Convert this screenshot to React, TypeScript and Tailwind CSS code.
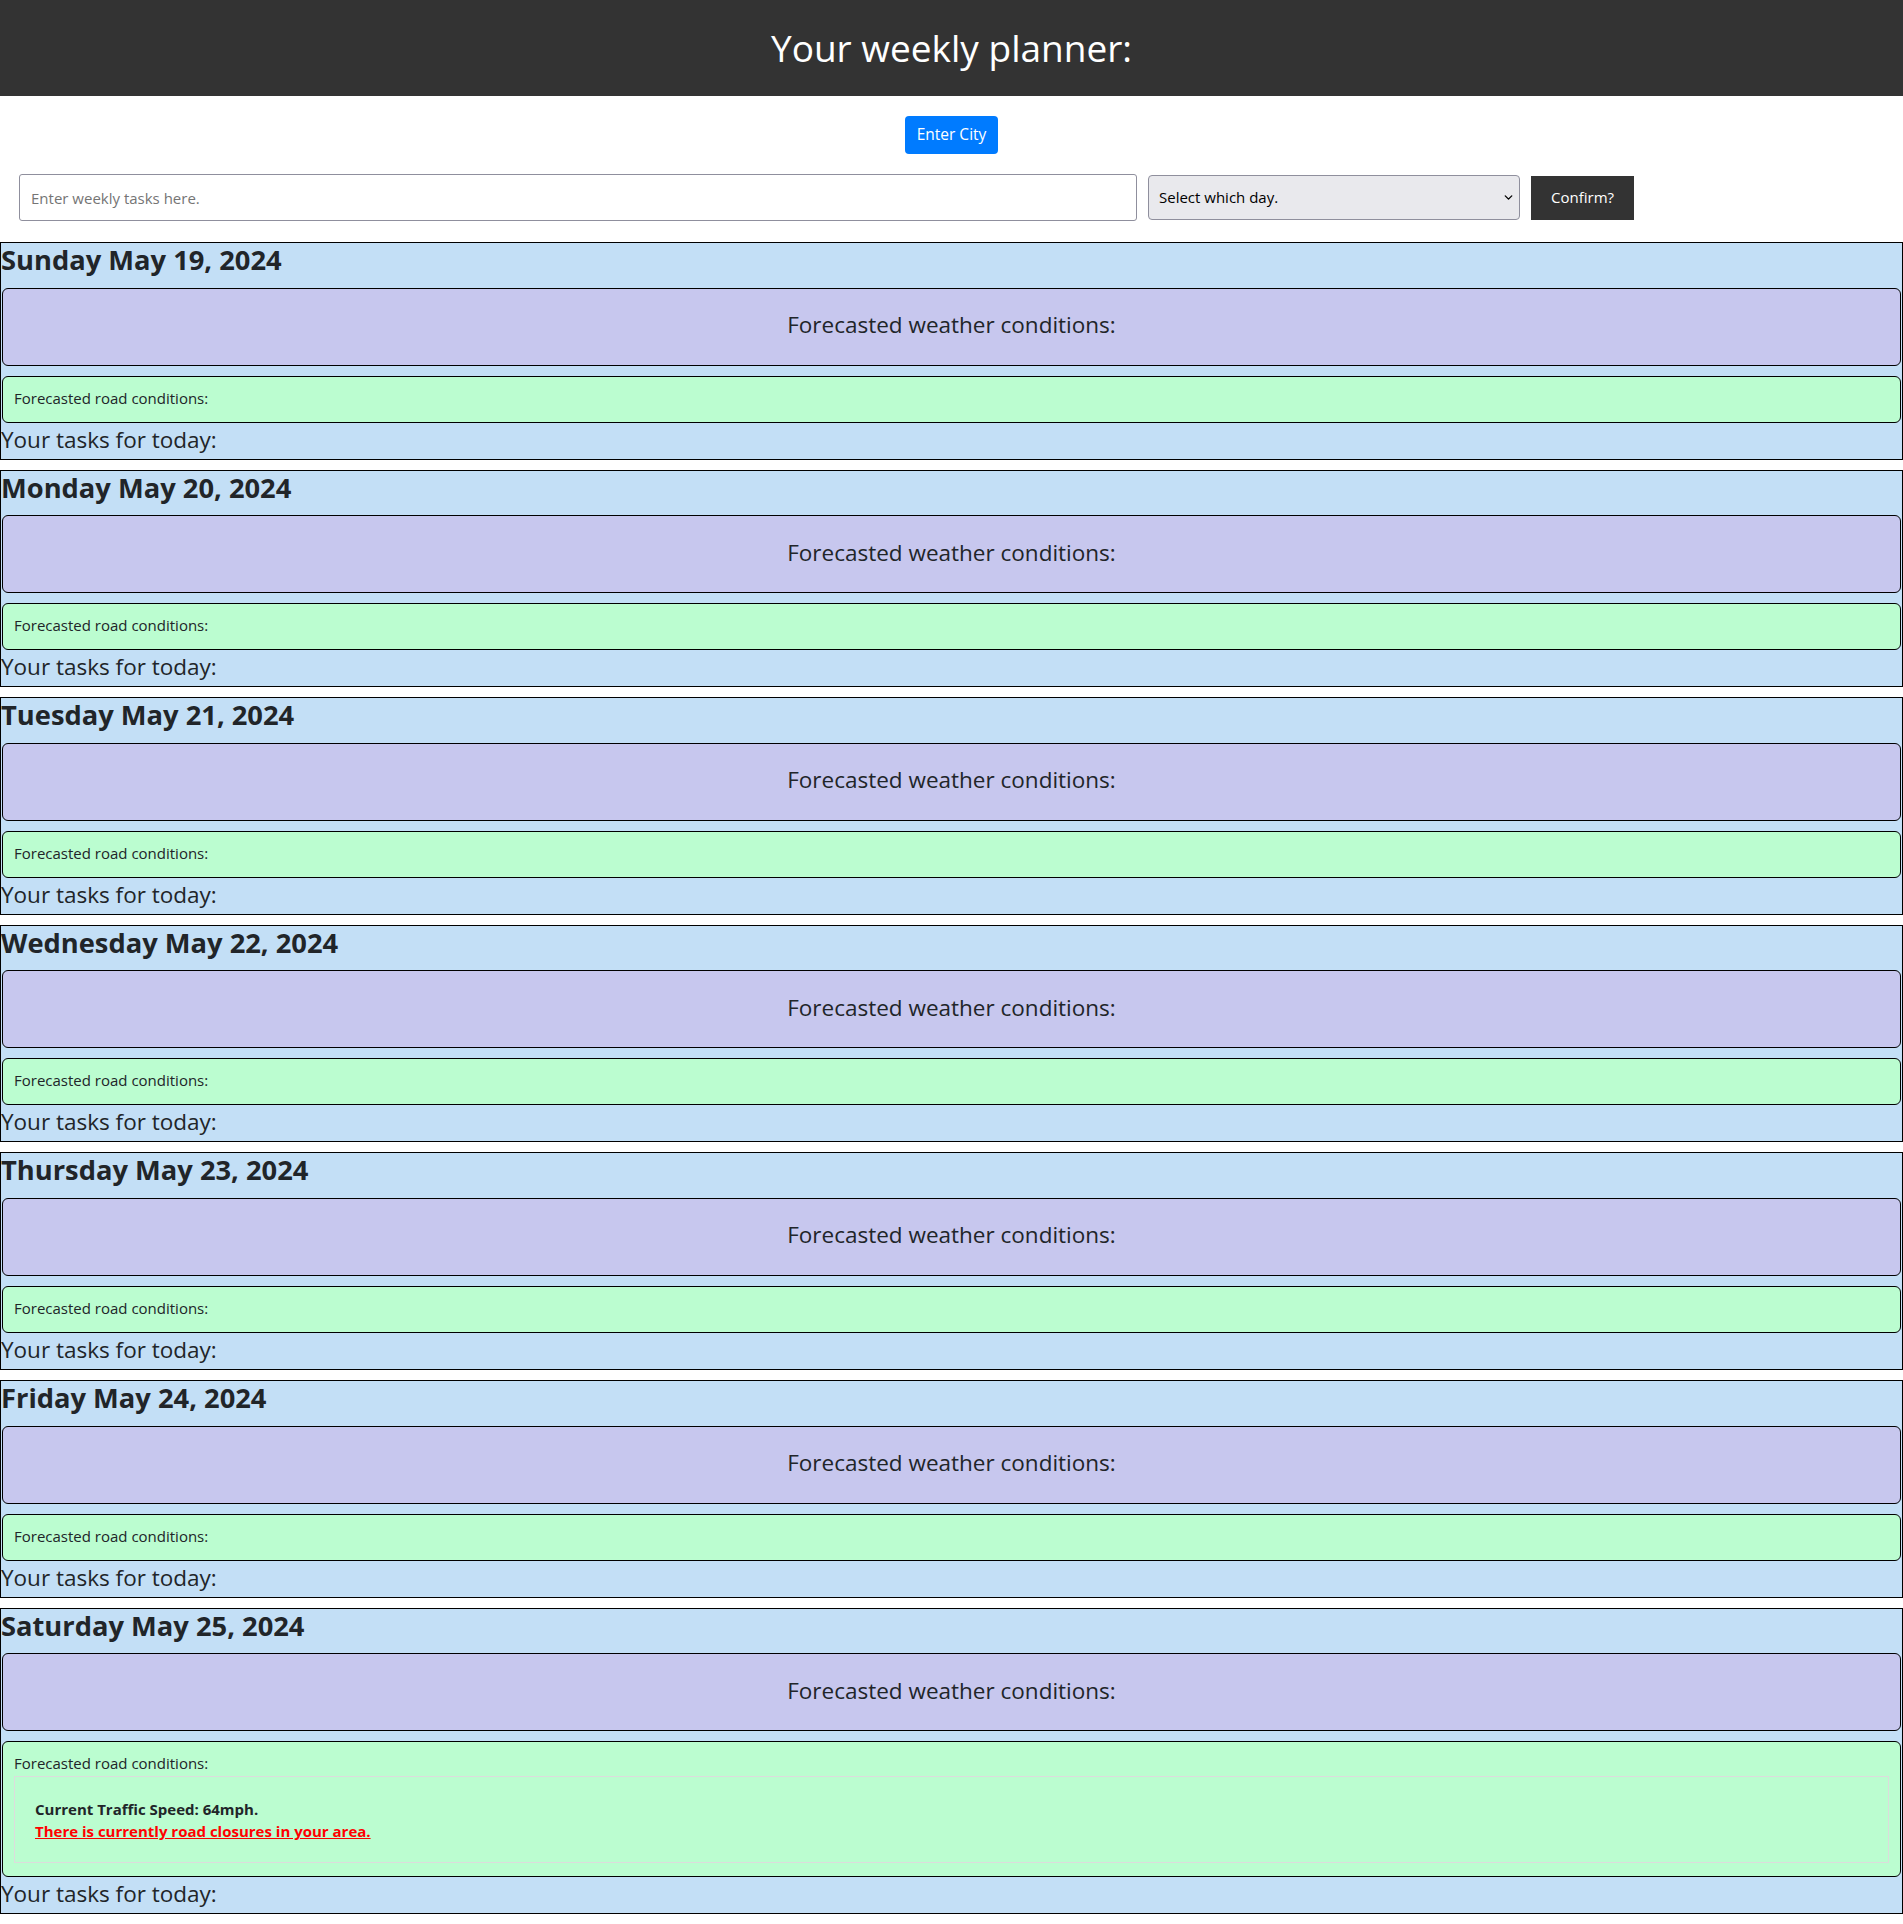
import { ChevronDown } from "lucide-react";

type Day = {
  label: string;
  closures?: boolean;
};

const days: Day[] = [
  { label: "Sunday May 19, 2024" },
  { label: "Monday May 20, 2024" },
  { label: "Tuesday May 21, 2024" },
  { label: "Wednesday May 22, 2024" },
  { label: "Thursday May 23, 2024" },
  { label: "Friday May 24, 2024" },
  { label: "Saturday May 25, 2024", closures: true },
];

function DayCard({ label, closures }: Day) {
  return (
    <section className="mb-[10px] border border-black bg-[#c3dff6] text-[#212529]">
      <h3 className="mb-[11px] text-[27.3px] font-bold leading-[33.6px]">{label}</h3>
      <div className="mx-px flex h-[78px] items-center justify-center rounded-[6px] border border-black bg-[#c7c7ee]">
        <p className="mb-[4px] text-[22.5px] leading-[1.2]">Forecasted weather conditions:</p>
      </div>
      <div className="mx-px mt-[10px] rounded-[6px] border border-black bg-[#bbfdd0] px-[11px] pt-[10px] pb-[13px]">
        <p className="text-[15px] leading-[22px]">Forecasted road conditions:</p>
        {closures && (
          <div className="mt-[2px] border border-[#dcdcdc] pt-[21px] pb-[20px] pl-[20px]">
            <p className="text-[15px] font-bold leading-[22px]">Current Traffic Speed: 64mph.</p>
            <p className="text-[15px] font-bold leading-[22px] text-[#ff0000] underline">
              There is currently road closures in your area.
            </p>
          </div>
        )}
      </div>
      <p className="pb-[3px] text-[22.5px] leading-[33px]">Your tasks for today:</p>
    </section>
  );
}

export default function App() {
  return (
    <div className="min-h-screen bg-white font-['Open_Sans',sans-serif]">
      <header className="flex h-[96px] items-center justify-center bg-[#333333]">
        <h1 className="text-[37px] font-normal text-white">Your weekly planner:</h1>
      </header>

      <div className="flex justify-center pt-[20px]">
        <button className="h-[38px] rounded-[4px] bg-[#007bff] px-[12px] text-[15.5px] text-white">
          Enter City
        </button>
      </div>

      <div className="mt-[20px] flex items-center gap-[11px] pl-[19px]">
        <input
          className="h-[47px] w-[1118px] rounded-[3px] border border-[#8f8f9d] bg-white px-[11px] text-[15px] placeholder:text-[#757575]"
          placeholder="Enter weekly tasks here."
        />
        <div className="flex h-[45px] w-[372px] items-center justify-between rounded-[4px] border border-[#8f8f9d] bg-[#e9e9ed] pl-[10px] pr-[4px] text-[15px] text-black">
          <span>Select which day.</span>
          <ChevronDown size={13} strokeWidth={2.5} />
        </div>
        <button className="h-[44px] w-[103px] bg-[#333333] text-[15px] text-white">Confirm?</button>
      </div>

      <main className="mt-[21px]">
        {days.map((d) => (
          <DayCard key={d.label} {...d} />
        ))}
      </main>
    </div>
  );
}
